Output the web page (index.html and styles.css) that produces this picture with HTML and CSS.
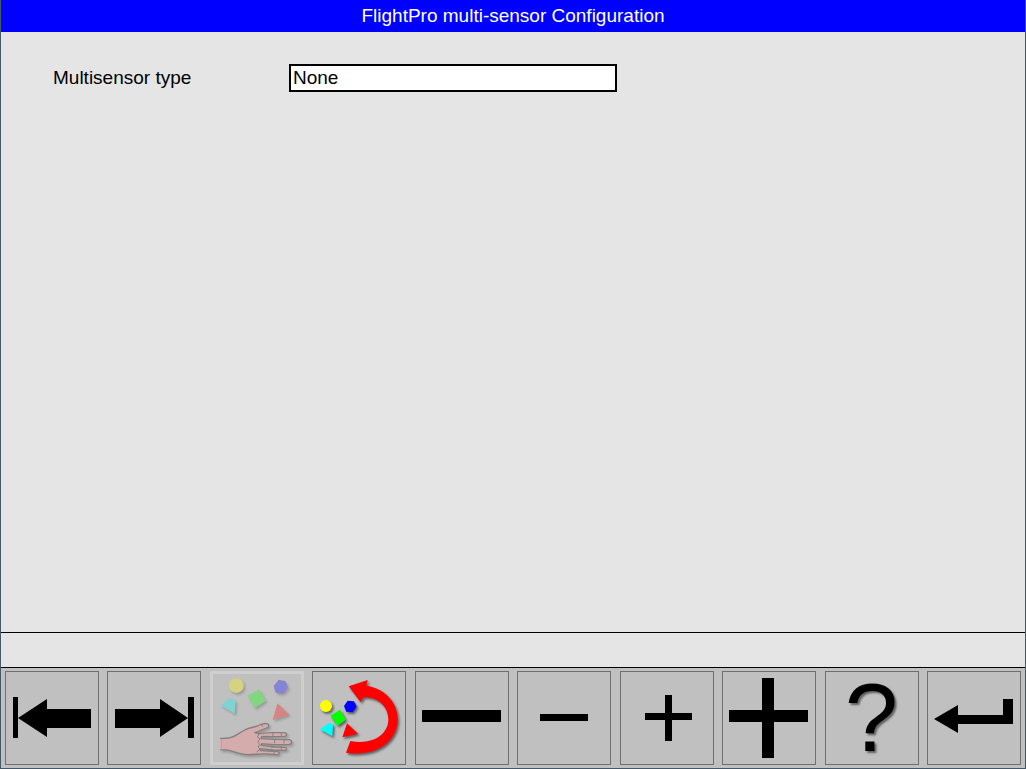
FILE: index.html
```html
<!DOCTYPE html>
<html lang="en">
<head>
    <meta charset="UTF-8">
    <title>FlightPro multi-sensor Configuration</title>
    <link rel="stylesheet" href="styles.css">
</head>
<body>
    <header class="title-bar">
        <h1>FlightPro multi-sensor Configuration</h1>
    </header>

    <main class="settings">
        <div class="setting">
            <label for="sensorType">Multisensor type</label>
            <select id="sensorType">
                <option>None</option>
            </select>
        </div>
    </main>

    <div class="status"></div>

    <nav class="toolbar">
        <button class="tool" aria-label="Previous">
            <svg viewBox="0 0 92 92">
                <path d="M7 25h5v41H7zM12 46L41 27v10h44v19H41v9z"/>
            </svg>
        </button>
        <button class="tool" aria-label="Next">
            <svg viewBox="0 0 92 92">
                <path d="M80 25h6v41h-6zM80 46L52 27v10H7v19h45v9z"/>
            </svg>
        </button>
        <button class="tool" aria-label="Select object" disabled>
            <svg viewBox="24 30 264 264">
                <g class="shadow">
                    <circle cx="94" cy="65" r="22" fill="#d6d37e"/>
                    <path fill="#8583d4" d="M221 47l21 5 7 20-15 17-22-3-6-20z"/>
                    <path fill="#82d682" d="M128 95l34-19 20 35-33 21z"/>
                    <path fill="#81d3d3" d="M46 124l29-23 17 10-3 38z"/>
                    <path fill="#d68383" d="M217 118l36 34-50 16z"/>
                </g>
                <g class="shadow">
                    <path fill="#d5acac" stroke="#858080" stroke-width="4" stroke-linejoin="round" d="M47 223c18 1 32-1 45-9l27-16c13-7 27-8 38-12 11-6 20-9 29-7 8 3 7 10-1 13-12 5-22 11-36 14l14 3 37-3h37c10 0 11 10 1 11l-33 1-35-1-2 7 40 2 44 1c10 1 10 13 0 14l-46 1-36-3-2 5 41 5 31 1c7 1 6 9-1 9l-35-1-39-4 1 6 52 3c7 1 6 9-1 9l-30-2c-20-1-38 2-62 2-20-1-33-8-52-13-7-2-14-2-26-2z"/>
                    <path fill="none" stroke="#858080" stroke-width="3" d="M168 182l7 6M148 205l14 5-5 9 8 6-7 9 6 7-5 8 6 6-10 9M204 207v10M229 207v9M209 226v12M237 228v11M201 244v9M229 247v9M207 261v9"/>
                </g>
                <path fill="none" stroke="#d5acac" stroke-width="4" d="M47 225v31"/>
            </svg>
        </button>
        <button class="tool" aria-label="Undo">
            <svg viewBox="15 24 276 276">
                <g class="shadow">
                    <circle cx="54" cy="126" r="18" fill="#ff0"/>
                    <path fill="#00f" d="M119 110l19 2 8 16-12 17-19-2-7-17z"/>
                    <path fill="#0f0" d="M67 155l29-18 17 30-24 18z"/>
                    <path fill="#0ff" d="M36 196l27-19 12 4-2 36z"/>
                    <path fill="#f00" d="M117 178l33 31-47 11z"/>
                    <path fill="#f00" d="M122 67l57-19-4 17c53 7 94 48 94 101 0 67-67 115-155 100l13-35c61 13 114-16 114-65 0-39-32-69-76-66l-7 15z"/>
                </g>
            </svg>
        </button>
        <button class="tool" aria-label="Decrease a lot">
            <svg viewBox="0 0 92 92">
                <path d="M6 38h79v12H6z"/>
            </svg>
        </button>
        <button class="tool" aria-label="Decrease">
            <svg viewBox="0 0 92 92">
                <path d="M22 42h48v7H22z"/>
            </svg>
        </button>
        <button class="tool" aria-label="Increase">
            <svg viewBox="0 0 92 92">
                <path d="M24 41h20V23h7v18h20v7H51v21h-7V48H24z"/>
            </svg>
        </button>
        <button class="tool" aria-label="Increase a lot">
            <svg viewBox="0 0 92 92">
                <path d="M6 38h33V6h12v32h34v12H51v36H39V50H6z"/>
            </svg>
        </button>
        <button class="tool help" aria-label="Help">?</button>
        <button class="tool" aria-label="Enter">
            <svg viewBox="0 0 92 92">
                <path d="M6 47l24-14v10h45V27h10v25H30v9z"/>
            </svg>
        </button>
    </nav>
</body>
</html>
```
FILE: styles.css
```css
* {
    box-sizing: border-box;
}

body {
    margin: 0;
    min-height: 100vh;
    display: flex;
    flex-direction: column;
    border: 1px solid #43586b;
    border-top: none;
    background: #e5e5e5;
    color: #000;
    font-family: "Liberation Sans", Arial, sans-serif;
    font-size: 19px;
}

.title-bar {
    background: #00f;
    color: #fff;
    text-align: center;
}

h1 {
    margin: 0;
    font-size: 19px;
    font-weight: normal;
    line-height: 32px;
}

.settings {
    flex: 1;
    padding: 32px 52px;
}

.setting {
    display: grid;
    grid-template-columns: 236px 328px;
    align-items: center;
}

select {
    appearance: none;
    height: 28px;
    padding: 0 2px 2px;
    border: 2px solid #000;
    border-radius: 0;
    background: #fff;
    color: #000;
    font: inherit;
}

.status {
    height: 36px;
    border: solid #000;
    border-width: 1px 0;
}

/* Bottom buttons */
.toolbar {
    display: flex;
    justify-content: space-between;
    padding: 3px 4px;
    background: #c0c0c0;
}

.tool {
    width: 94px;
    height: 94px;
    padding: 0;
    border: 1px solid #707070;
    background: #c0c0c0;
    color: #000;
    font-family: inherit;
}

.tool:disabled {
    border: 3px solid #cfcfcf;
}

.tool svg {
    display: block;
    width: 100%;
    height: 100%;
}

.shadow {
    filter: drop-shadow(5px 6px 3px rgba(0, 0, 0, 0.5));
}

.tool:disabled .shadow {
    filter: drop-shadow(5px 6px 3px rgba(0, 0, 0, 0.2));
}

.help {
    font-size: 96px;
    line-height: 92px;
    text-shadow: 2px 2px 2px rgba(0, 0, 0, 0.5);
}
```
